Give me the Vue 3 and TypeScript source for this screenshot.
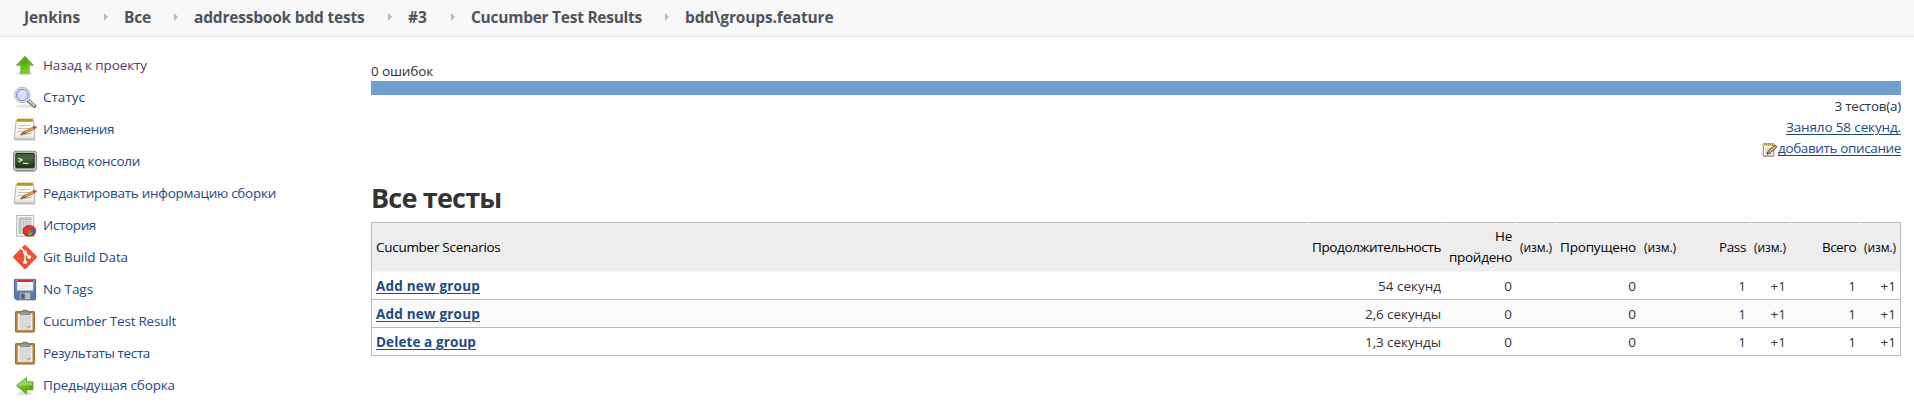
<script setup lang="ts">
interface Label { text: string; width: number }
interface Task extends Label { icon: string; visited?: boolean }
interface Scenario { name: Label; duration: Label }

const crumbs: Label[] = [
  { text: 'Jenkins', width: 56 },
  { text: 'Все', width: 27 },
  { text: 'addressbook bdd tests', width: 170.5 },
  { text: '#3', width: 19 },
  { text: 'Cucumber Test Results', width: 171 },
  { text: 'bdd\\groups.feature', width: 148.5 },
]

const tasks: Task[] = [
  { icon: 'up', text: 'Назад к проекту', width: 104, visited: true },
  { icon: 'search', text: 'Статус', width: 42 },
  { icon: 'notepad', text: 'Изменения', width: 71 },
  { icon: 'terminal', text: 'Вывод консоли', width: 97 },
  { icon: 'notepad', text: 'Редактировать информацию сборки', width: 233 },
  { icon: 'graph', text: 'История', width: 53 },
  { icon: 'git', text: 'Git Build Data', width: 85 },
  { icon: 'save', text: 'No Tags', width: 50 },
  { icon: 'clipboard', text: 'Cucumber Test Result', width: 133 },
  { icon: 'clipboard', text: 'Результаты теста', width: 107 },
  { icon: 'previous', text: 'Предыдущая сборка', width: 132 },
]

const scenarios: Scenario[] = [
  { name: { text: 'Add new group', width: 104 }, duration: { text: '54 секунд', width: 63 } },
  { name: { text: 'Add new group', width: 104 }, duration: { text: '2,6 секунды', width: 76 } },
  { name: { text: 'Delete a group', width: 100 }, duration: { text: '1,3 секунды', width: 76 } },
]

// Tracks the label so that it takes exactly the given width.
const vFit = {
  mounted(el: HTMLElement, binding: { value: number }) {
    const natural = el.getBoundingClientRect().width
    const count = (el.textContent ?? '').length
    el.style.letterSpacing = `${(binding.value - natural) / count}px`
  },
}
</script>

<template>
  <div class="page">
    <svg class="defs" width="0" height="0" aria-hidden="true">
      <defs>
        <linearGradient id="green" x1="0" y1="0" x2="0.3" y2="1">
          <stop offset="0" stop-color="#4d9a0a" /><stop offset="0.55" stop-color="#5fae10" /><stop offset="1" stop-color="#74d81c" />
        </linearGradient>
        <linearGradient id="green-side" x1="0" y1="0" x2="1" y2="1">
          <stop offset="0" stop-color="#9bdc62" /><stop offset="0.6" stop-color="#62b41a" /><stop offset="1" stop-color="#4e9a06" />
        </linearGradient>
        <linearGradient id="lens" x1="0" y1="0" x2="1" y2="1">
          <stop offset="0" stop-color="#b4d0f0" /><stop offset="0.6" stop-color="#d5e5f8" /><stop offset="1" stop-color="#bdd6f2" />
        </linearGradient>
        <linearGradient id="screen" x1="0" y1="0" x2="0" y2="1">
          <stop offset="0" stop-color="#2a4424" /><stop offset="0.5" stop-color="#3b5a32" /><stop offset="1" stop-color="#1c3018" />
        </linearGradient>
        <linearGradient id="paper" x1="0" y1="0" x2="0" y2="1">
          <stop offset="0" stop-color="#fcfcfb" /><stop offset="0.8" stop-color="#f0f0ed" /><stop offset="1" stop-color="#d5d5cf" />
        </linearGradient>
        <linearGradient id="disk" x1="0" y1="0" x2="0" y2="1">
          <stop offset="0" stop-color="#6391cc" /><stop offset="1" stop-color="#5574ae" />
        </linearGradient>
      </defs>
      <symbol id="up" viewBox="0 0 24 24">
        <ellipse cx="12" cy="20.5" rx="8" ry="1.6" fill="#ddd" />
        <path d="M12 3.3 20.4 12.2H16.2V20.3H7.8V12.2H3.4Z" fill="url(#green)" stroke="#4a9410" stroke-width=".7" />
        <path d="M12 4.7 17.9 11.3H15.3V19.4H8.7V11.3H5.8Z" fill="none" stroke="#8cd44d" stroke-opacity=".6" stroke-width=".7" />
      </symbol>
      <symbol id="search" viewBox="0 0 24 24">
        <ellipse cx="12" cy="21.2" rx="10" ry="2" fill="#e7e7e7" />
        <path d="M15 15.4 21.4 21" stroke="#808080" stroke-width="4" stroke-linecap="round" />
        <path d="M15.2 15.2 21 20.3" stroke="#c4c4c4" stroke-width="2" stroke-linecap="round" />
        <circle cx="9.3" cy="10" r="7.7" fill="#eee" stroke="#aaa" stroke-width=".9" />
        <circle cx="9.3" cy="10" r="5.8" fill="url(#lens)" stroke="#5f88bd" stroke-width="1" />
        <path d="M5.2 9.5C6 6.5 9 5 12 6.6 10 7.3 8 9.3 5.2 9.5Z" fill="#e4effb" opacity=".7" />
      </symbol>
      <symbol id="notepad" viewBox="0 0 24 24">
        <path d="M1 22.9H22.3" stroke="#bbb" stroke-width="1" />
        <path d="M3.2 3.5H20.4L21.9 20.8Q22 22.3 20.5 22.3H2.6Q1.2 22.3 1.3 20.8Z" fill="url(#paper)" stroke="#a3a39c" stroke-width=".8" />
        <path d="M3.8 1.7H20.2V4.6H3.8Z" fill="#cdb432" />
        <path d="M4.8 1.7V4.8M6.8 1.7V4.8M8.8 1.7V4.8M10.8 1.7V4.8M12.8 1.7V4.8M14.8 1.7V4.8M16.8 1.7V4.8M18.8 1.7V4.8" stroke="#7c681b" stroke-width=".7" />
        <path d="M5 8.5H17M5 11.5H16M4.5 14.5H11.5" stroke="#bfbfbd" stroke-width=".9" />
        <path d="M7 18.2 18.5 16" stroke="#a5a5a2" stroke-width="1.4" opacity=".7" />
        <path d="M7.8 17.4 11.3 14.3 19.9 10 21.4 12 12.6 16.4Z" fill="#eb9b42" stroke="#a45c13" stroke-width=".6" />
        <path d="M7.8 17.4 11.3 14.3 12.6 16.4Z" fill="#a98955" stroke="#4f4030" stroke-width=".5" />
        <path d="M19.9 10 22 9.1Q23.5 9.3 23.3 10.9L21.4 12Z" fill="#dc4a36" stroke="#9c402d" stroke-width=".5" />
      </symbol>
      <symbol id="notepad-small" viewBox="0 0 16 16">
        <path d="M1.2 2.6H11.8V14.3H1.2Z" fill="#f3f3f0" stroke="#77786f" stroke-width=".9" />
        <path d="M1.2 13.4H11.8" stroke="#b9b9b2" />
        <path d="M1 1H12.2V4H1Z" fill="#eccb2c" />
        <path d="M2.5 1V3M4.5 1V3M6.5 1V3M8.5 1V3M10.5 1V3" stroke="#8c741b" stroke-width=".8" />
        <path d="M3 6.5H9M3 8.5H7M3 10.5H5" stroke="#c2c2bf" stroke-width=".8" />
        <path d="M5 12.2 6.3 8.8 12.9 2.9 14.8 5 8.2 11Z" fill="#dfb275" stroke="#453a2b" stroke-width=".9" />
        <path d="M5 12.2 5.7 10.3 6.9 11.5Z" fill="#2e2a24" />
      </symbol>
      <symbol id="terminal" viewBox="0 0 24 24">
        <path d="M2.5 22.4H21.5" stroke="#bdbdb8" stroke-width="1.4" />
        <rect x=".5" y="2.2" width="23" height="19.3" rx="2.5" fill="#c9cac5" stroke="#868883" />
        <rect x="2.8" y="4.4" width="18.4" height="14.4" rx=".8" fill="url(#screen)" stroke="#192514" />
        <path d="M3.4 5H20.6V10Q12 10.5 3.4 13Z" fill="#708c66" opacity=".35" />
        <path d="M5.6 9.1 9 11.1 5.6 13.1" fill="none" stroke="#f0f6ed" stroke-width="1.2" />
        <path d="M10 14.4H15.5" stroke="#e3ecdf" stroke-width="1.1" />
        <circle cx="16.5" cy="20.2" r=".6" fill="#bcc931" />
      </symbol>
      <symbol id="graph" viewBox="0 0 24 24">
        <rect x="3.7" y="2.4" width="17" height="20.8" fill="#f5f5f4" stroke="#aeb0ad" stroke-width=".9" />
        <path d="M5.5 4.2H18.8V21H5.5Z" fill="#c9cac8" />
        <path d="M7.7 6.5H18.8V19H7.7Z" fill="#e6e7e5" />
        <path d="M5.5 6.5H18.8M5.5 8.7H18.8M5.5 11H18.8M5.5 13.2H18.8M5.5 15.5H18.8M5.5 17.8H18.8M7.8 4.2V21M10.5 4.2V21M13.2 4.2V21M16 4.2V21" stroke="#b2b4b1" stroke-width=".6" />
        <ellipse cx="16.4" cy="18.9" rx="6.4" ry="4.7" fill="#981616" />
        <ellipse cx="16.4" cy="17.4" rx="6.4" ry="5" fill="#df3737" stroke="#b11c1c" stroke-width=".6" />
        <path d="M16.4 17.4 22.6 16.3Q23 19.3 20.4 21Z" fill="#3f6bb0" />
        <path d="M16.4 17.4 19.8 21.6Q17.5 23 15 22.3Z" fill="#75b72c" />
      </symbol>
      <symbol id="git" viewBox="0 0 24 24">
        <path d="M10.9.5Q12 -.5 13.1.5L23.5 10.9Q24.5 12 23.5 13.1L13.1 23.5Q12 24.5 10.9 23.5L.5 13.1Q-.5 12 .5 10.9Z" fill="#f05133" />
        <path d="M8.4 3.4 12 7V17.5M12 8 16.2 12.2" fill="none" stroke="#fff" stroke-width="1.5" />
        <circle cx="12" cy="7.4" r="1.9" fill="#fff" /><circle cx="16.1" cy="12.1" r="1.9" fill="#fff" /><circle cx="12" cy="17.2" r="1.9" fill="#fff" />
      </symbol>
      <symbol id="save" viewBox="0 0 24 24">
        <path d="M1.8 2.4H22.2Q22.6 2.4 22.6 3V22Q22.6 22.8 21.8 22.8H3.5L1.4 21V3Q1.4 2.4 1.8 2.4Z" fill="url(#disk)" stroke="#2d5086" stroke-width=".8" />
        <path d="M4.2 2.3H20V13.4H4.2Z" fill="#fafafa" stroke="#b8c6dc" stroke-width=".5" />
        <path d="M4.2 2.3H20V5H4.2Z" fill="#e22525" />
        <path d="M6 7.3H18M6 9.3H18M6 11.3H18" stroke="#dadada" stroke-width=".7" />
        <path d="M6.8 15.3H17.6V22.6H6.8Z" fill="#bcbdba" stroke="#6d7480" stroke-width=".7" />
        <path d="M8.4 16.9H11.5V21.7H8.4Z" fill="#44608f" stroke="#54575b" stroke-width=".5" />
      </symbol>
      <symbol id="clipboard" viewBox="0 0 24 24">
        <path d="M3 23.4H21.5" stroke="#bbb" stroke-width=".9" />
        <rect x="2.4" y="2.6" width="19.2" height="20.2" rx=".7" fill="#bd812d" stroke="#8e5c14" stroke-width=".8" />
        <path d="M4.9 4.7H19.3V20.8H4.9Z" fill="#f7f7f7" stroke="#d8d1c5" stroke-width=".5" />
        <path d="M6.2 6.2H18V16.5L14 19.7H6.2Z" fill="#dadada" />
        <path d="M14.3 20.6V17H19.1Z" fill="#b1b1ae" />
        <path d="M7.2 5.6V3.5Q7.2 2.7 8 2.7H9.7V1.5Q9.7 1 10.3 1H13.8Q14.4 1 14.4 1.5V2.7H16Q16.8 2.7 16.8 3.5V5.6Z" fill="#8d8f8b" stroke="#5f615e" stroke-width=".6" />
        <path d="M8 4.2H16" stroke="#b8bab6" stroke-width=".7" />
      </symbol>
      <symbol id="previous" viewBox="0 0 24 24">
        <ellipse cx="12" cy="20.4" rx="8" ry="1.8" fill="#e2e2e2" />
        <path d="M3.4 12.6 13.6 4.2V8.8H20V16.9H13.6V21.2Z" fill="url(#green-side)" stroke="#55a018" stroke-width=".7" />
        <path d="M4.8 12.6 12.8 6V9.6H19.2V12.4Z" fill="#b6e98b" opacity=".55" />
      </symbol>
    </svg>

    <nav class="breadcrumbs">
      <div v-for="crumb in crumbs" :key="crumb.text" class="crumb">
        <span v-fit="crumb.width" class="label">{{ crumb.text }}</span>
        <i class="chevron"></i>
      </div>
    </nav>

    <div class="body">
      <aside class="tasks">
        <a v-for="task in tasks" :key="task.text" class="task" :class="{ visited: task.visited }">
          <svg class="icon"><use :href="'#' + task.icon" /></svg>
          <span v-fit="task.width" class="label">{{ task.text }}</span>
        </a>
      </aside>

      <main class="main">
        <div class="line"><span v-fit="62" class="label">0 ошибок</span></div>
        <div class="bar"></div>
        <div class="line right"><span v-fit="66.5" class="label">3 тестов(а)</span></div>
        <div class="line right"><a v-fit="115" class="label link">Заняло 58 секунд.</a></div>
        <div class="line right">
          <svg class="small-icon"><use href="#notepad-small" /></svg>
          <a v-fit="123" class="label link">добавить описание</a>
        </div>

        <h1><span v-fit="130.5" class="label">Все тесты</span></h1>

        <div class="table">
          <div class="row head">
            <div class="cell name"><span v-fit="124.5" class="label">Cucumber Scenarios</span></div>
            <div class="cell"><span v-fit="129" class="label">Продолжительность</span></div>
            <div class="cell stack">
              <span v-fit="17" class="label">Не</span>
              <span v-fit="63" class="label">пройдено</span>
            </div>
            <div class="cell diff"><span v-fit="32" class="label">(изм.)</span></div>
            <div class="cell"><span v-fit="76" class="label">Пропущено</span></div>
            <div class="cell diff"><span v-fit="32" class="label">(изм.)</span></div>
            <div class="cell"><span v-fit="27" class="label">Pass</span></div>
            <div class="cell diff"><span v-fit="32" class="label">(изм.)</span></div>
            <div class="cell"><span v-fit="34" class="label">Всего</span></div>
            <div class="cell diff"><span v-fit="32" class="label">(изм.)</span></div>
          </div>
          <div v-for="(item, index) in scenarios" :key="index" class="row">
            <div class="cell name"><a v-fit="item.name.width" class="label link strong">{{ item.name.text }}</a></div>
            <div class="cell"><span v-fit="item.duration.width" class="label">{{ item.duration.text }}</span></div>
            <div class="cell">0</div>
            <div class="cell"></div>
            <div class="cell">0</div>
            <div class="cell"></div>
            <div class="cell">1</div>
            <div class="cell">+1</div>
            <div class="cell">1</div>
            <div class="cell">+1</div>
          </div>
        </div>
      </main>
    </div>
  </div>
</template>

<style>
body {
  margin: 0;
  background: #fff;
}
</style>

<style scoped>
.page {
  height: 407px;
  overflow: hidden;
  color: #333;
  font: 13.5px/21px "Open Sans", "Noto Sans", sans-serif;
}
.defs {
  position: absolute;
}
.label {
  display: inline-block;
  white-space: nowrap;
}
.breadcrumbs {
  box-sizing: border-box;
  height: 37px;
  padding: 0 0 2px 24px;
  display: grid;
  grid-template-columns: 100px 70px 214px 63px 214px 214px;
  background: #f8f8f8;
  border-bottom: 1px solid #e2edf2;
  color: #4d545d;
  font-size: 15.5px;
  font-weight: 700;
  line-height: 34px;
}
.crumb {
  display: flex;
  justify-content: space-between;
  align-items: center;
}
.chevron {
  width: 0;
  height: 0;
  margin: 0 16px 1px 0;
  border: 4px solid transparent;
  border-left-color: #bababa;
  border-right-width: 0;
}
.crumb:last-child .chevron {
  display: none;
}
.body {
  display: grid;
  grid-template-columns: 371px 1530px;
}
.tasks {
  padding: 16px 0 0 13px;
  display: flex;
  flex-direction: column;
  gap: 8px;
}
.task {
  height: 24px;
  display: flex;
  align-items: center;
  gap: 6px;
  color: #204a87;
}
.task.visited {
  color: #5c3566;
}
.icon {
  width: 24px;
  height: 24px;
  flex: none;
}
.main {
  padding-top: 23px;
}
.line {
  height: 21px;
  line-height: 23px;
  display: flex;
  align-items: flex-start;
}
.right {
  justify-content: flex-end;
}
.bar {
  height: 14px;
  background: #729fcf;
}
.link {
  color: #204a87;
  text-decoration: underline;
  text-decoration-thickness: 1px;
  text-underline-offset: 2px;
}
.strong {
  font-weight: 700;
}
.small-icon {
  width: 16px;
  height: 16px;
  margin-top: 5px;
}
h1 {
  height: 38px;
  margin: 20px 0 6px;
  font-size: 27px;
  line-height: 40px;
}
.table {
  border: 1px solid #bbb;
}
.row {
  display: grid;
  grid-template-columns: 936px 137px 71px 40px 84px 40px 70px 40px 70px 40px;
  height: 27px;
  line-height: 22px;
  border-bottom: 1px solid #bbb;
}
.row:not(.head) .cell {
  padding-top: 1px;
}
.row:nth-child(odd):not(.head) {
  background: #fbfbfb;
}
.row:last-child {
  border-bottom: 0;
}
.head {
  height: 48px;
  line-height: 21px;
  background: #ededed;
  border-bottom-color: #f8f8f8;
  color: #000;
}
.cell {
  padding: 0 4px;
  display: flex;
  align-items: center;
  justify-content: flex-end;
}
.cell.name {
  justify-content: flex-start;
}
.cell.stack {
  flex-direction: column;
  align-items: flex-end;
  justify-content: center;
}
.diff {
  font-size: 12px;
}
.head .cell {
  position: relative;
}
/* Small light notch where two header cells meet. */
.head .cell:not(:last-child)::after {
  content: "";
  position: absolute;
  top: 0;
  right: -2px;
  border: 2px solid transparent;
  border-top-color: #fff;
  border-bottom-width: 0;
}
</style>
